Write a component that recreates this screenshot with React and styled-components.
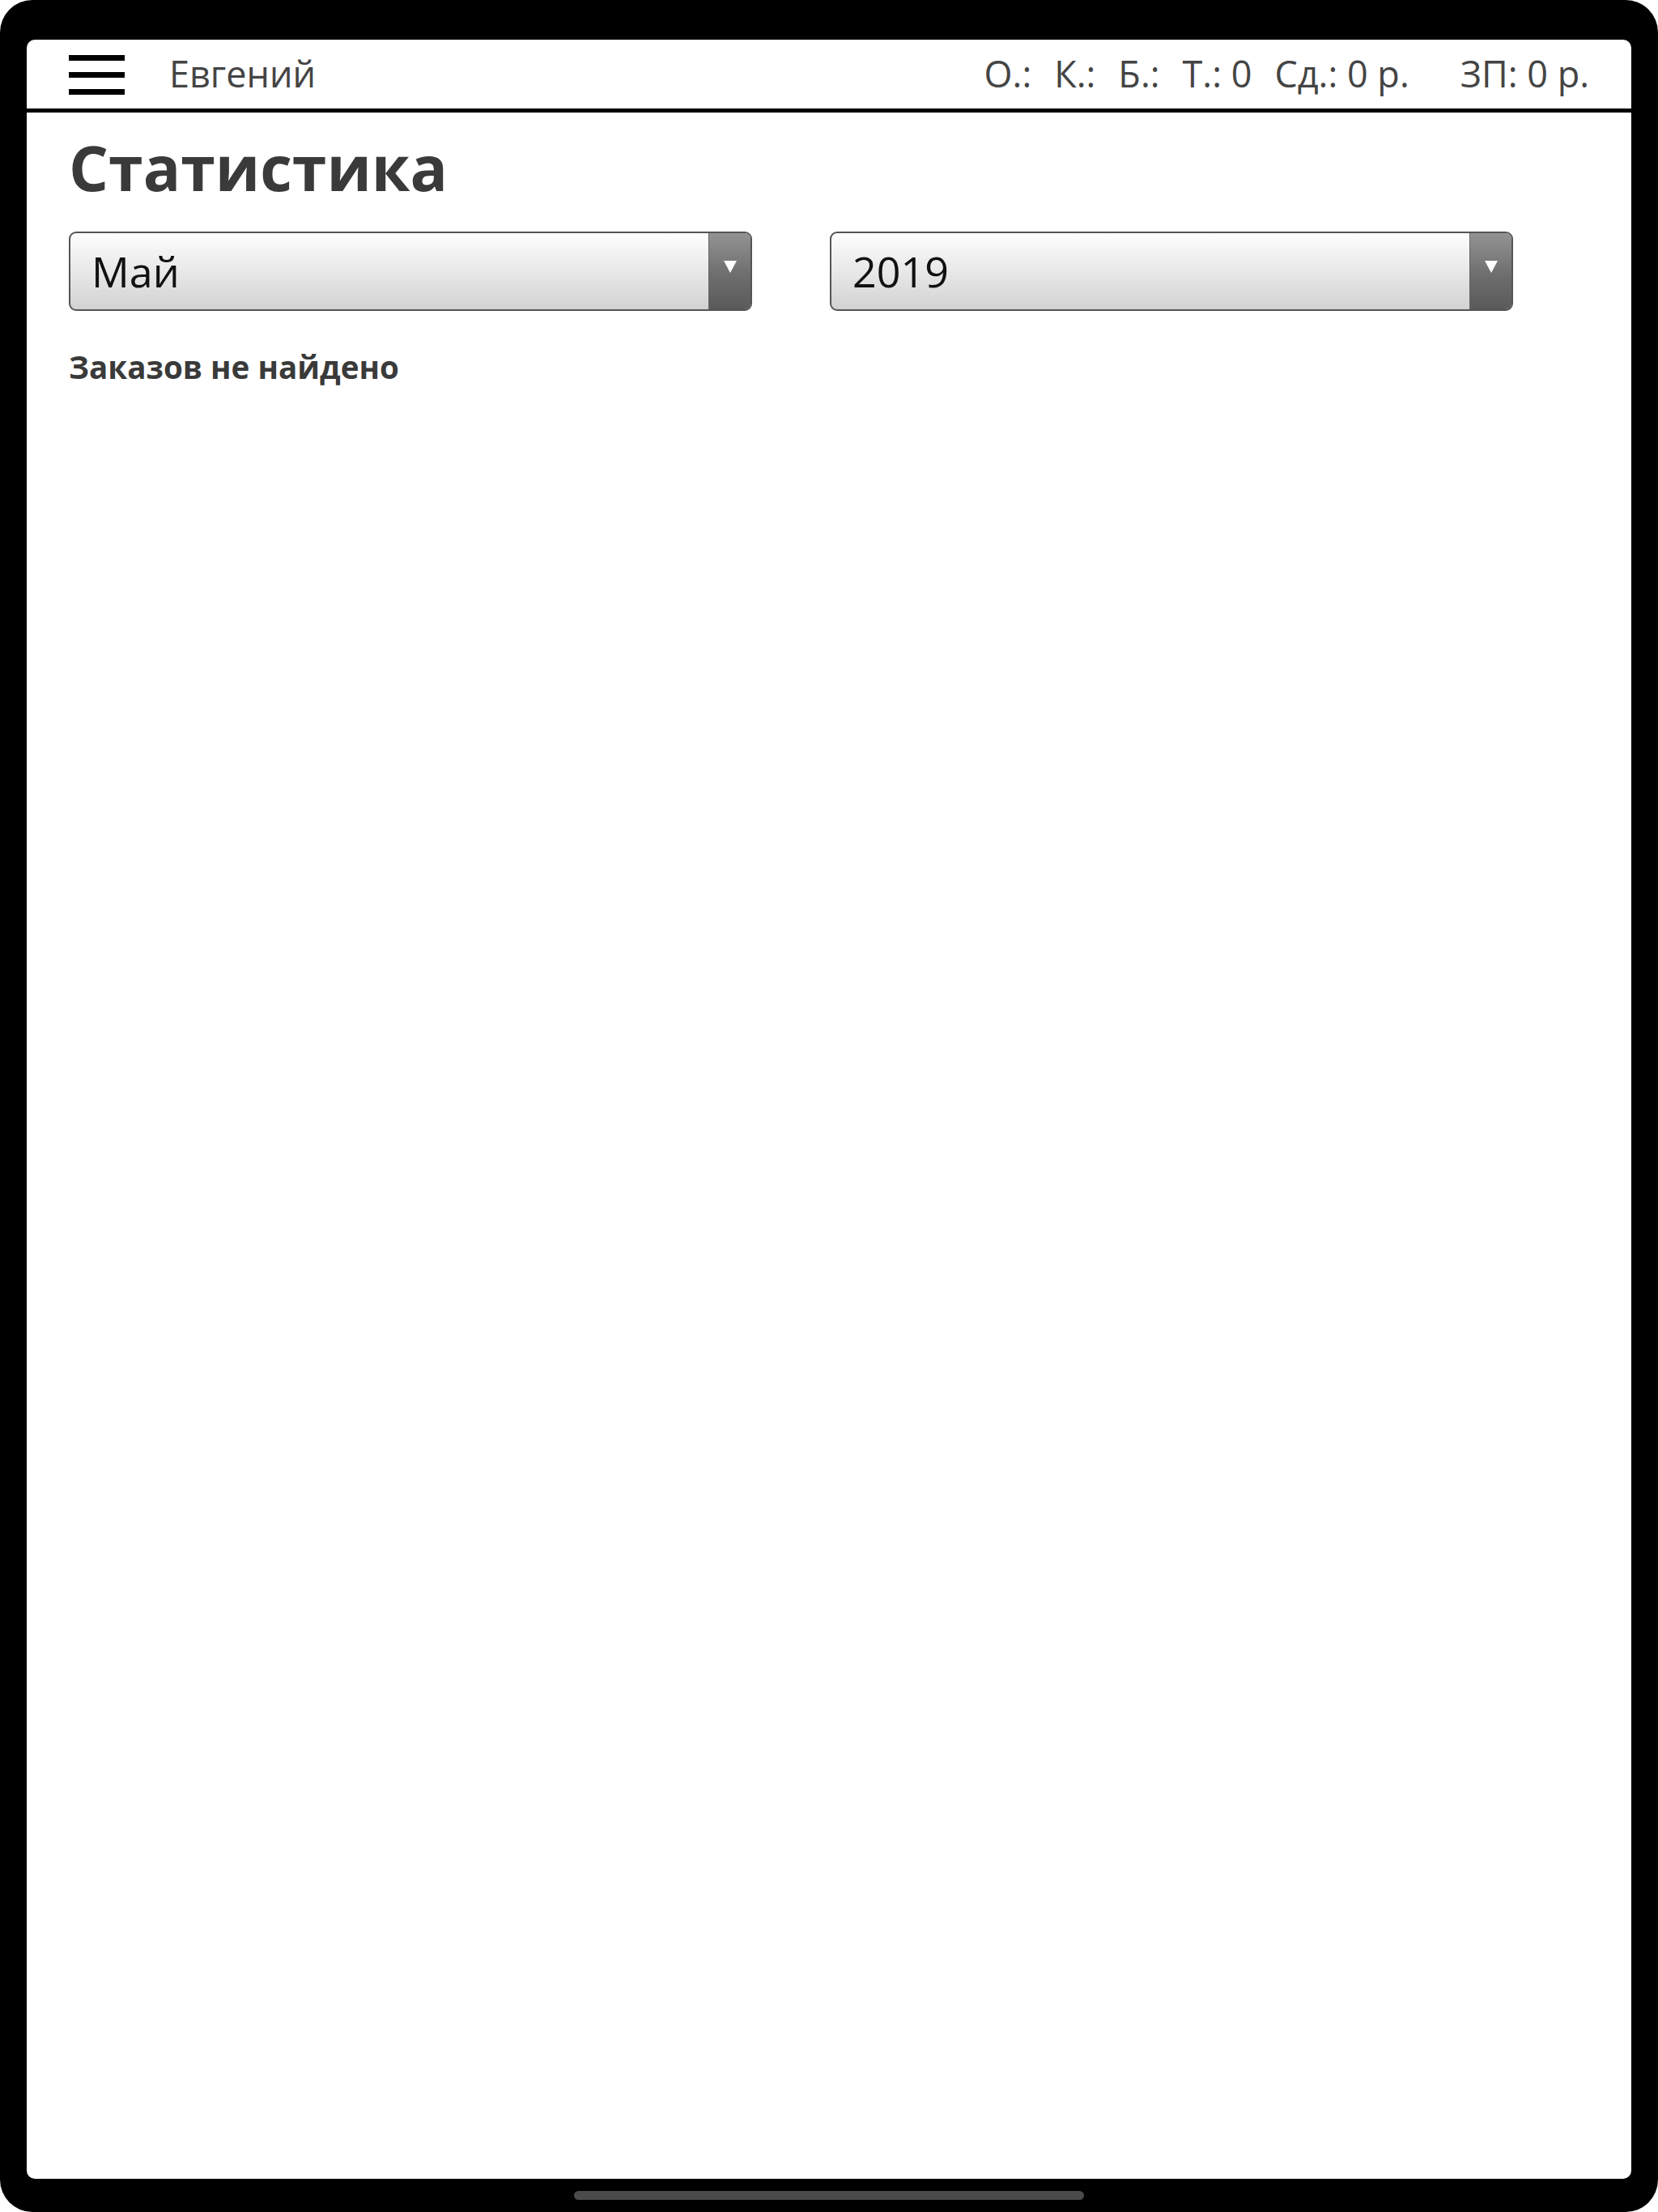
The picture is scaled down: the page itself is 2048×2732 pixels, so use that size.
import React from 'react';
import styled, { createGlobalStyle } from 'styled-components';

const GlobalStyle = createGlobalStyle`
  html, body {
    margin: 0;
    padding: 0;
    background: #fff;
  }
  * {
    box-sizing: border-box;
  }
  body {
    font-family: "Open Sans", "Noto Sans", sans-serif;
  }
`;

const Device = styled.div`
  width: 2048px;
  height: 2732px;
  background: #000;
  border-radius: 40px;
  padding: 49px 33px 0;
  display: flex;
  flex-direction: column;
`;

const Screen = styled.div`
  flex: 1;
  background: #fff;
  border-radius: 10px;
  overflow: hidden;
  display: flex;
  flex-direction: column;
`;

const HomeArea = styled.div`
  height: 41px;
  display: flex;
  align-items: center;
  justify-content: center;
`;

const HomeBar = styled.div`
  width: 630px;
  height: 11px;
  border-radius: 6px;
  background: #4a4a4a;
`;

const TopBar = styled.header`
  height: 90px;
  padding: 0 52px 0 52px;
  display: flex;
  align-items: center;
  border-bottom: 5px solid #000;
  color: #444;
  font-size: 45px;
`;

const Burger = styled.button`
  width: 69px;
  height: 49px;
  padding: 0;
  border: 0;
  background: none;
  display: flex;
  flex-direction: column;
  justify-content: space-between;
  margin-top: 2px;
  span {
    display: block;
    height: 7px;
    background: #000;
  }
`;

const UserName = styled.div`
  margin-left: 55px;
  margin-top: -3px;
`;

const Stats = styled.div`
  margin-left: auto;
  margin-top: -3px;
  display: flex;
`;

const Stat = styled.span`
  margin-left: ${p => p.gap || 0}px;
  white-space: pre;
`;

const Content = styled.main`
  padding: 22px 52px 0;
`;

const Title = styled.h1`
  margin: 0;
  font-size: 77px;
  line-height: 1.2;
  font-weight: 700;
  color: #3a3a3a;
`;

const Filters = styled.div`
  margin-top: 33px;
  display: flex;
  gap: 96px;
`;

const SelectBox = styled.div`
  width: 844px;
  height: 98px;
  border: 2px solid #555;
  border-radius: 9px;
  overflow: hidden;
  display: flex;
  background: linear-gradient(#fdfdfd, #e6e6e6 55%, #d2d2d2);
`;

const SelectValue = styled.div`
  flex: 1;
  display: flex;
  align-items: center;
  padding-left: 26px;
  font-size: 52px;
  line-height: 1;
  color: #111;
`;

const SelectArrow = styled.div`
  width: 52px;
  border-left: 1px solid #666;
  background: linear-gradient(#939393, #6e6e6e 55%, #5a5a5a);
  display: flex;
  justify-content: center;
  padding-top: 34px;
  &::after {
    content: "";
    width: 0;
    height: 0;
    border-left: 8px solid transparent;
    border-right: 8px solid transparent;
    border-top: 15px solid #fff;
  }
`;

const Empty = styled.p`
  margin: 46px 0 0;
  font-size: 38.6px;
  line-height: 1.2;
  font-weight: 700;
  color: #3a3a3a;
`;

function Select({ value }) {
  return (
    <SelectBox>
      <SelectValue>{value}</SelectValue>
      <SelectArrow />
    </SelectBox>
  );
}

export default function App() {
  return (
    <>
      <GlobalStyle />
      <Device>
        <Screen>
          <TopBar>
            <Burger aria-label="menu">
              <span />
              <span />
              <span />
            </Burger>
            <UserName>Евгений</UserName>
            <Stats>
              <Stat>О.:</Stat>
              <Stat gap={28}>К.:</Stat>
              <Stat gap={28}>Б.:</Stat>
              <Stat gap={28}>Т.: 0</Stat>
              <Stat gap={28}>Сд.: 0 р.</Stat>
              <Stat gap={63}>ЗП: 0 р.</Stat>
            </Stats>
          </TopBar>
          <Content>
            <Title>Статистика</Title>
            <Filters>
              <Select value="Май" />
              <Select value="2019" />
            </Filters>
            <Empty>Заказов не найдено</Empty>
          </Content>
        </Screen>
        <HomeArea>
          <HomeBar />
        </HomeArea>
      </Device>
    </>
  );
}
